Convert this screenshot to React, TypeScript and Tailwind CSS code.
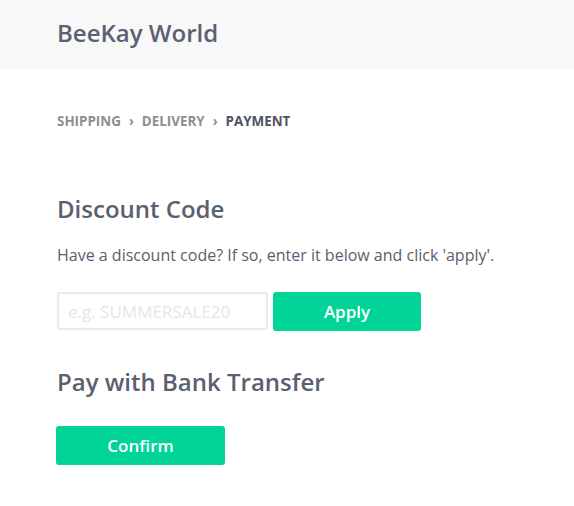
import React from 'react';

const font = { fontFamily: '"Open Sans", "Noto Sans", sans-serif' };

export default function App() {
  return (
    <div className="min-h-[506px] w-full bg-white text-[#5a606e]" style={font}>
      {/* header */}
      <header className="h-[69px] bg-[#f8f8f8] px-[57px] pb-[4px] flex items-center">
        <h1 className="text-[24px] font-semibold leading-none text-[#5a6170]">BeeKay World</h1>
      </header>

      <main className="px-[56px]">
        {/* breadcrumb */}
        <nav className="mt-[44px] pl-px flex items-center gap-[8px] text-[13.4px] font-bold uppercase leading-[16px]">
          <span className="text-[#8e8e8e]">Shipping</span>
          <span className="text-[#8e8e8e]">›</span>
          <span className="text-[#8e8e8e]">Delivery</span>
          <span className="text-[#8e8e8e]">›</span>
          <span className="text-[#4e5362]">Payment</span>
        </nav>

        <h2 className="mt-[65px] pl-px text-[24px] font-semibold leading-[30px] text-[#5a606e]">Discount Code</h2>
        <p className="mt-[19px] pl-px text-[16px] leading-[24px] text-[#5a606e]">
          Have a discount code? If so, enter it below and click 'apply'.
        </p>

        <div className="mt-[25px] pl-px flex gap-[5px]">
          <input
            className="h-[38px] w-[211px] rounded-[3px] border-2 border-[#ebebeb] px-[9px] text-[17px] outline-none placeholder:text-[#e6e6e6]"
            placeholder="e.g. SUMMERSALE20"
            style={font}
          />
          <button className="h-[39px] w-[148px] rounded-[3px] bg-[#00d497] text-[17px] font-semibold text-white">
            Apply
          </button>
        </div>

        <h2 className="mt-[36px] pl-px text-[24px] font-semibold leading-[30px] text-[#5a606e]">Pay with Bank Transfer</h2>

        <button className="mt-[29px] h-[39px] w-[169px] rounded-[3px] bg-[#00d497] text-[17px] font-semibold text-white">
          Confirm
        </button>
      </main>
    </div>
  );
}
